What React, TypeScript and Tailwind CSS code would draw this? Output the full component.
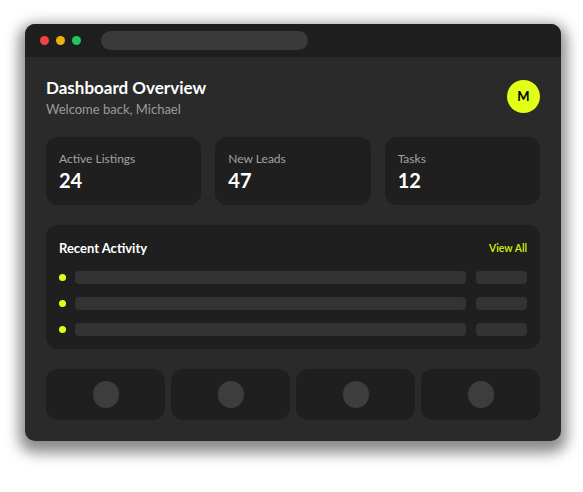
import React from 'react';

const stats = [
  { label: 'Active Listings', value: '24' },
  { label: 'New Leads', value: '47' },
  { label: 'Tasks', value: '12' },
];

export default function App() {
  return (
    <div
      className="min-h-[492px] w-[583px] bg-white pt-[24px] pl-[25px]"
      style={{ fontFamily: 'Lato, "Noto Sans", sans-serif' }}
    >
      <div className="flex h-[417px] w-[536px] flex-col overflow-hidden rounded-[10px] bg-[#2a2a2a] shadow-[0_6px_14px_6px_rgba(0,0,0,0.45)]">
        {/* title bar */}
        <div className="flex h-[33px] items-center bg-[#1e1e1e] pl-[15px]">
          <div className="flex gap-[7px]">
            <span className="h-[9px] w-[9px] rounded-full bg-[#ef4444]" />
            <span className="h-[9px] w-[9px] rounded-full bg-[#eab308]" />
            <span className="h-[9px] w-[9px] rounded-full bg-[#22c55e]" />
          </div>
          <div className="ml-[20px] h-[19px] w-[207px] rounded-full bg-[#3a3a3a]" />
        </div>

        <div className="flex flex-1 flex-col px-[21px] pt-[20px]">
          {/* header */}
          <div className="flex items-start justify-between">
            <div>
              <h1 className="text-[17px] font-bold leading-[22px] text-white">Dashboard Overview</h1>
              <p className="mt-[1px] text-[13px] leading-[18px] text-[#9a9a9a]">Welcome back, Michael</p>
            </div>
            <div className="mt-[3px] flex h-[33px] w-[33px] items-center justify-center rounded-full bg-[#e2ff17] text-[13px] font-bold text-black">
              M
            </div>
          </div>

          {/* stats */}
          <div className="mt-[19px] grid grid-cols-3 gap-[14px]">
            {stats.map((s) => (
              <div key={s.label} className="h-[68px] rounded-[12px] bg-[#1f1f1f] px-[13px] pt-[14px]">
                <div className="text-[12px] leading-[16px] text-[#a3a3a3]">{s.label}</div>
                <div className="text-[20px] font-bold leading-[26px] text-white">{s.value}</div>
              </div>
            ))}
          </div>

          {/* recent activity */}
          <div className="mt-[20px] rounded-[12px] bg-[#1f1f1f] px-[13px] pb-[13px] pt-[14px]">
            <div className="flex items-center justify-between">
              <h2 className="text-[13px] font-bold leading-[18px] text-white">Recent Activity</h2>
              <span className="text-[10.5px] font-semibold leading-[18px] text-[#d9f20b]">View All</span>
            </div>
            <div className="mt-[14px] flex flex-col gap-[13px]">
              {[0, 1, 2].map((i) => (
                <div key={i} className="flex items-center">
                  <span className="h-[7px] w-[7px] rounded-full bg-[#e2ff17]" />
                  <div className="ml-[9px] h-[13px] flex-1 rounded-[4px] bg-[#333333]" />
                  <div className="ml-[10px] h-[13px] w-[51px] rounded-[4px] bg-[#333333]" />
                </div>
              ))}
            </div>
          </div>

          {/* quick actions */}
          <div className="mt-[20px] grid grid-cols-4 gap-[6px]">
            {[0, 1, 2, 3].map((i) => (
              <div key={i} className="flex h-[51px] items-center justify-center rounded-[12px] bg-[#1f1f1f]">
                <span className="h-[27px] w-[26px] rounded-full bg-[#3d3d3d]" />
              </div>
            ))}
          </div>
        </div>
      </div>
    </div>
  );
}
